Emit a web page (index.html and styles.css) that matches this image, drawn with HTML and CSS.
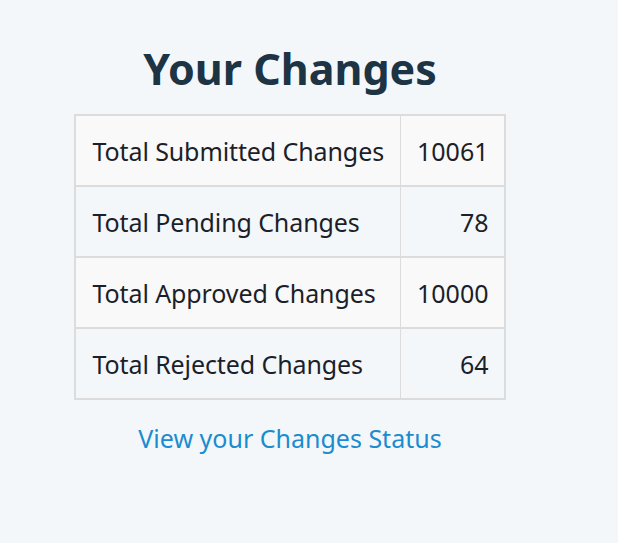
FILE: index.html
```html
<!DOCTYPE html>
<html lang="en">
<head>
<meta charset="utf-8">
<title>Your Changes</title>
<link rel="stylesheet" href="styles.css">
</head>
<body>
<main class="wrap">
  <h1 class="title">Your Changes</h1>
  <table class="stats">
    <tbody>
      <tr><td class="label">Total Submitted Changes</td><td class="num">10061</td></tr>
      <tr><td class="label">Total Pending Changes</td><td class="num">78</td></tr>
      <tr><td class="label">Total Approved Changes</td><td class="num">10000</td></tr>
      <tr><td class="label">Total Rejected Changes</td><td class="num">64</td></tr>
    </tbody>
  </table>
  <a class="status-link" href="#">View your Changes Status</a>
</main>
</body>
</html>
```
FILE: styles.css
```css
html, body {
  background: #f4f7fa;
}
body {
  margin: 8px;
  font-family: "Noto Sans", "Open Sans", sans-serif;
  color: #1b1f2a;
}
.wrap {
  width: 564px;
  display: flex;
  flex-direction: column;
  align-items: center;
}
.title {
  margin: 33px 0 17px;
  font-size: 43px;
  line-height: 56px;
  font-weight: 700;
  color: #1c3444;
}
.stats {
  border-collapse: collapse;
  border: 2px solid #dcdcdc;
}
.stats td {
  font-size: 25px;
  line-height: 36px;
  padding: 17px 16px 16px;
  border-left: 1px solid #dcdcdc;
  border-right: 1px solid #dcdcdc;
  border-bottom: 2px solid #dcdcdc;
}
.stats tr:nth-child(odd) {
  background: #f9f9f9;
}
.stats .label {
  letter-spacing: -0.1px;
}
.stats .num {
  text-align: right;
  padding-right: 15px;
}
.status-link {
  margin-top: 20px;
  font-size: 25px;
  line-height: 36px;
  color: #1a8ccf;
  text-decoration: none;
}
```
